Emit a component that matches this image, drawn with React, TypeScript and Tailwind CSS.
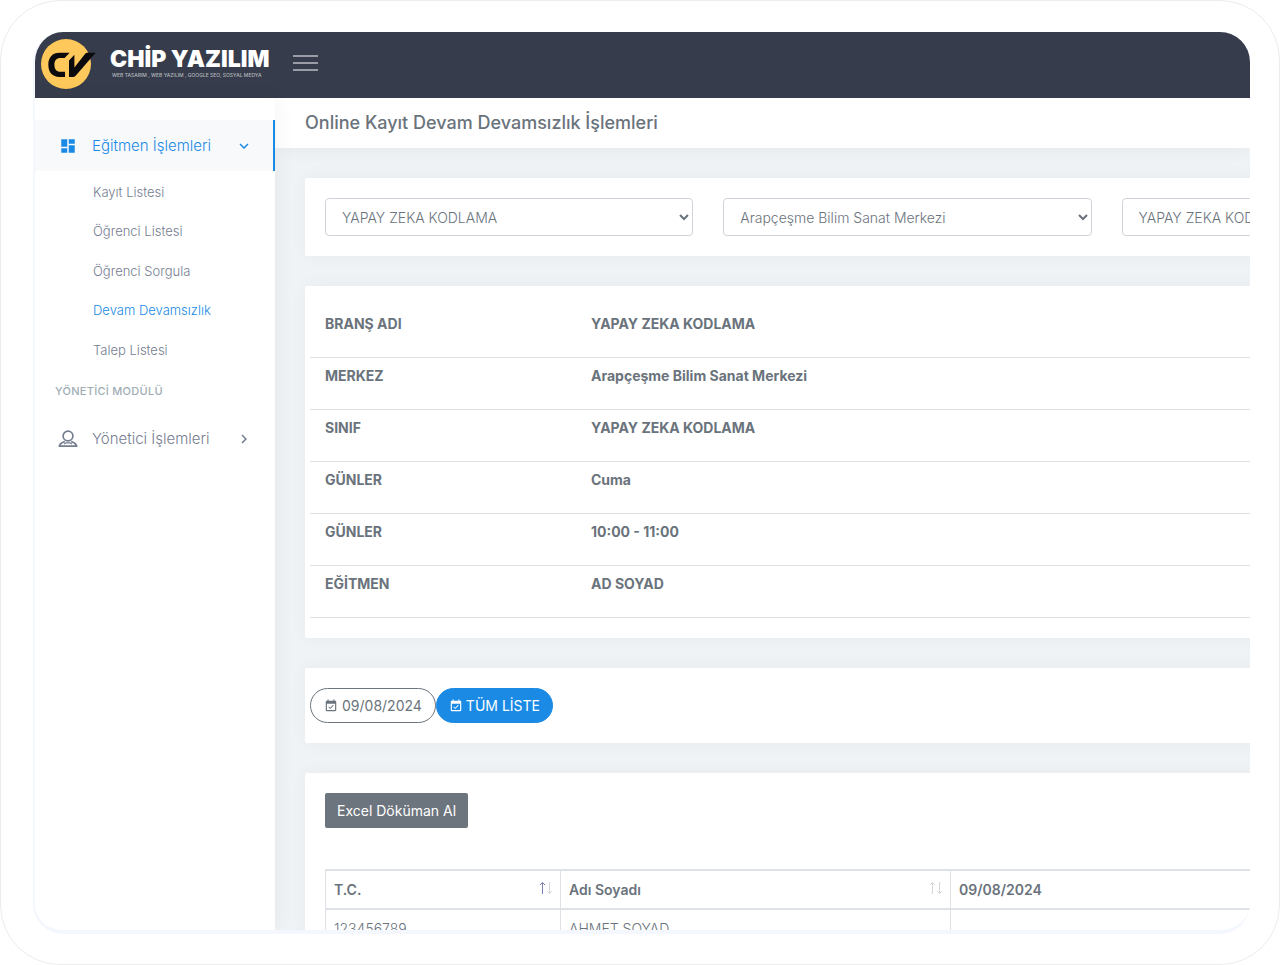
import React from 'react';
import { MdDashboard, MdChevronRight, MdExpandMore, MdEventAvailable } from 'react-icons/md';

const subMenu = ['Kayıt Listesi', 'Öğrenci Listesi', 'Öğrenci Sorgula', 'Devam Devamsızlık', 'Talep Listesi'];

const filters = [
  { label: 'Branş', value: 'YAPAY ZEKA KODLAMA' },
  { label: 'Merkez', value: 'Arapçeşme Bilim Sanat Merkezi' },
  { label: 'Sınıf', value: 'YAPAY ZEKA KODLAMA' },
];

const details = [
  ['BRANŞ ADI', 'YAPAY ZEKA KODLAMA'],
  ['MERKEZ', 'Arapçeşme Bilim Sanat Merkezi'],
  ['SINIF', 'YAPAY ZEKA KODLAMA'],
  ['GÜNLER', 'Cuma'],
  ['GÜNLER', '10:00 - 11:00'],
  ['EĞİTMEN', 'AD SOYAD'],
];

function Logo() {
  return (
    <a href="#" className="flex items-center gap-3.5 pl-1.5">
      <svg width="55" height="52" viewBox="0 0 55 52" className="shrink-0" aria-hidden="true">
        <circle cx="25" cy="26" r="25" fill="#ffc85a" />
        <path
          fill="#0b0b0d"
          d="M28.7 14.7H18.5C11.5 14.7 7.3 19.2 7.3 26.6C7.3 34.5 11.5 39 18.5 39H24V33.7H19.5C15.5 33.7 13.4 31 13.4 26.9C13.4 22.6 15.5 20 19.5 20H23.6Z"
        />
        <path fill="#0b0b0d" d="M28 22.4L33.4 16.8V29.6L44.4 15.6C44.9 15 45.5 14.7 46.2 14.7H54.7L34.4 38C33.8 38.7 33 39.1 32 39.1H28Z" />
      </svg>
      <span className="mb-0.5 flex flex-col text-white">
        <span className="text-[23px] leading-6 font-black whitespace-nowrap">CHİP YAZILIM</span>
        <span className="pl-0.5 text-[5px] leading-2 font-medium whitespace-nowrap text-[#b4b7bd]">
          WEB TASARIM , WEB YAZILIM , GOOGLE SEO, SOSYAL MEDYA
        </span>
      </span>
    </a>
  );
}

function UserIcon() {
  return (
    <svg width="20" height="18" viewBox="0 0 20 18" fill="none" stroke="currentColor" strokeWidth="1.7" strokeLinejoin="round" aria-hidden="true">
      <circle cx="10" cy="6" r="4.9" />
      <path d="M6.8 11.4L4 12.800C2.600 13.500 1.700 14.500 1.300 16.200H18.700C18.300 14.500 17.400 13.500 16 12.800L13.200 11.400" />
      <path d="M6 14L8 12.800H12L14 14" strokeWidth="1.200" />
    </svg>
  );
}

function SortArrows({ active }: { active?: boolean }) {
  return (
    <svg width="14" height="14" viewBox="0 0 14 14" fill="none" className="mb-1" aria-hidden="true">
      <path d="M4.500 13V1.500M2 4L4.500 1.500L7 4" stroke={active ? '#7a80b4' : '#d5d8db'} />
      <path d="M11.500 1V12.500M9 10L11.500 12.500L14 10" stroke="#d5d8db" />
    </svg>
  );
}

function Card({ children }: { children: React.ReactNode }) {
  return <section className="rounded-xs bg-white p-5 shadow-[1px_0_20px_rgba(0,0,0,0.04)]">{children}</section>;
}

export default function App() {
  return (
    <div className="h-screen overflow-hidden rounded-[60px] border border-[#ececec] bg-white pt-[31px] pr-[29px] pb-[30px] pl-8 font-['Inter',sans-serif] text-sm font-light text-[#6a737c]">
      <div className="flex h-full flex-col overflow-hidden rounded-[30px] border-b-4 border-l-2 border-[#f4f7fe]">
        <header className="flex h-[66px] shrink-0 items-center bg-[#363c4b] pb-0.5">
          <div className="w-60 shrink-0">
            <Logo />
          </div>
          <button type="button" aria-label="Menü" className="mb-0.5 ml-[18px] flex w-[25px] flex-col gap-[5px]">
            <span className="h-0.5 bg-[#9a9da5]" />
            <span className="h-0.5 bg-[#9a9da5]" />
            <span className="h-0.5 bg-[#9a9da5]" />
          </button>
        </header>

        <div className="flex min-h-0 flex-1">
          <aside className="z-10 w-60 shrink-0 bg-white pt-[22px] text-[#757d91] shadow-[1px_0_20px_rgba(0,0,0,0.05)]">
            <nav>
              <a href="#" className="flex h-[51px] items-center border-r-2 border-[#1a8ae5] bg-[#f7f9fb] pl-6 text-[15px] text-[#1a8ae5]">
                <MdDashboard size={18} />
                <span className="ml-[15px] flex-1">Eğitmen İşlemleri</span>
                <MdExpandMore size={18} className="mr-5" />
              </a>
              <ul className="mt-px flex h-[198px] flex-col text-[13px]">
                {subMenu.map((item) => (
                  <li key={item} className="flex flex-1 items-center pl-[58px]">
                    <a href="#" className={item === 'Devam Devamsızlık' ? 'text-[#1a8ae5]' : ''}>
                      {item}
                    </a>
                  </li>
                ))}
              </ul>
              <h2 className="flex h-[43px] items-center pl-5 text-[11px] font-medium tracking-wide text-[#a0adb4]">YÖNETİCİ MODÜLÜ</h2>
              <a href="#" className="flex h-[51px] items-center pl-[23px] text-[15px]">
                <UserIcon />
                <span className="ml-3.5 flex-1">Yönetici İşlemleri</span>
                <MdChevronRight size={18} className="mr-[22px]" />
              </a>
            </nav>
          </aside>

          <main className="min-w-0 flex-1 overflow-hidden bg-[#eff3f6]">
            <div className="flex h-[50px] items-center bg-white pl-[30px] shadow-[1px_0_20px_rgba(0,0,0,0.06)]">
              <h1 className="text-lg font-medium whitespace-nowrap">Online Kayıt Devam Devamsızlık İşlemleri</h1>
            </div>

            <div className="flex w-[1663px] flex-col gap-[30px] p-[30px]">
              <Card>
                <div className="grid grid-cols-4 gap-[30px]">
                  {filters.map((f) => (
                    <select
                      key={f.label}
                      aria-label={f.label}
                      className="h-[38px] rounded-sm border border-[#ced4da] bg-white px-3"
                    >
                      <option>{f.value}</option>
                    </select>
                  ))}
                </div>
              </Card>

              <Card>
                <dl className="-mx-[15px] font-bold">
                  {details.map(([name, value], i) => (
                    <div key={i} className="flex h-[52px] border-b border-[#dee0e3] pt-2">
                      <dt className="w-[266px] pl-[15px]">{name}</dt>
                      <dd className="pl-[15px]">{value}</dd>
                    </div>
                  ))}
                </dl>
              </Card>

              <Card>
                <div className="-mx-[15px] flex">
                  <button type="button" className="flex h-[35px] items-center gap-1 rounded-full border border-[#6c757d] px-[13px] font-normal">
                    <MdEventAvailable size={14} />
                    09/08/2024
                  </button>
                  <button type="button" className="flex h-[35px] items-center gap-[3px] rounded-full border border-[#1a8ae5] bg-[#1a8ae5] px-3 font-normal text-white">
                    <MdEventAvailable size={14} />
                    TÜM LİSTE
                  </button>
                </div>
              </Card>

              <Card>
                <button type="button" className="h-[35px] rounded-xs bg-[#6c757d] px-3 font-normal text-white">
                  Excel Döküman Al
                </button>
                <table className="mt-[41px] w-full table-fixed border-collapse text-left">
                  <thead>
                    <tr className="h-[39px] border-y-2 border-[#dee2e6]">
                      <th className="w-[235px] border-x border-[#dee2e6] px-2 font-semibold">
                        <div className="flex items-center justify-between">
                          T.C.
                          <SortArrows active />
                        </div>
                      </th>
                      <th className="w-[390px] border-x border-[#dee2e6] px-2 font-semibold">
                        <div className="flex items-center justify-between">
                          Adı Soyadı
                          <SortArrows />
                        </div>
                      </th>
                      <th className="border-x border-[#dee2e6] px-2 font-semibold">09/08/2024</th>
                    </tr>
                  </thead>
                  <tbody>
                    <tr className="h-[39px] border-b border-[#dee2e6]">
                      <td className="border-x border-[#dee2e6] px-2">123456789</td>
                      <td className="border-x border-[#dee2e6] px-2">AHMET SOYAD</td>
                      <td className="border-x border-[#dee2e6] px-2" />
                    </tr>
                  </tbody>
                </table>
              </Card>
            </div>
          </main>
        </div>
      </div>
    </div>
  );
}
